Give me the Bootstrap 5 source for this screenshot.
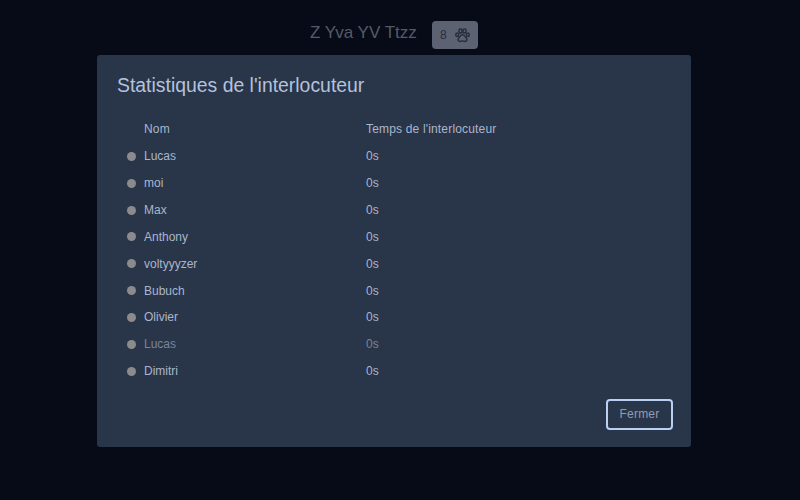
<!DOCTYPE html>
<html lang="fr">
<head>
  <meta charset="UTF-8" />
  <meta name="viewport" content="width=device-width, initial-scale=1.0"/>
  <title>Statistiques de l'interlocuteur</title>
  <link href="https://cdn.jsdelivr.net/npm/bootstrap@5.3.3/dist/css/bootstrap.min.css" rel="stylesheet">
  <style>
    body {
      background: #070b17;
      font-family: "Liberation Sans", Arial, sans-serif;
      width: 800px;
      height: 500px;
      overflow: hidden;
    }
    .top-bar { height: 55px; padding-top: 21px; padding-left: 310px; }
    .room-name { font-size: 17px; line-height: 24px; color: #555a68; }
    .member-chip {
      width: 46px; height: 28px; margin-left: 15px;
      background: #5d6273; color: #282d3b;
      border-radius: 4px; font-size: 12px;
    }
    .stats-box {
      width: 594px; height: 392px; margin-left: 97px;
      background: #293548; border-radius: 3px;
      padding: 18px 18px 17px 20px;
    }
    .stats-title { font-size: 19.4px; line-height: 24px; font-weight: 400; color: #b3c2dd; margin: 0 0 19px; }
    .stats-table { --bs-table-bg: transparent; --bs-table-color: #a9b6cd; margin: 0; width: 554px; font-size: 12px; table-layout: fixed; }
    .stats-table th, .stats-table td { height: 26.86px; padding: 0; border: 0; font-weight: 400; vertical-align: middle; line-height: 18px; }
    .stats-table th { letter-spacing: .17px; }
    .col-dot { width: 27px; }
    .col-name { width: 222px; }
    .dot { display: block; width: 9px; height: 9px; border-radius: 50%; background: #8b8b8b; margin-left: 10px; }
    .row-dim td { --bs-table-color: #78859b; color: #78859b; }
    .close-btn {
      width: 67px; height: 31px; padding: 0 0 2px;
      background: transparent; color: #8f9db5;
      border: 2px solid #b9d0f2; border-radius: 4px;
      font-size: 12px; letter-spacing: .2px;
    }
    .close-btn:hover { background: transparent; color: #8f9db5; border-color: #b9d0f2; }
  </style>
</head>
<body>
  <div class="top-bar d-flex align-items-start">
    <span class="room-name">Z Yva YV Ttzz</span>
    <span class="member-chip d-flex align-items-center justify-content-center gap-2">
      <span>8</span>
      <svg width="15" height="15" viewBox="0 0 16 16" fill="none" stroke="currentColor" stroke-width="1.6">
        <ellipse cx="5.9" cy="3.2" rx="1.7" ry="2.2"/>
        <ellipse cx="10.1" cy="3.2" rx="1.7" ry="2.2"/>
        <ellipse cx="2.3" cy="7.2" rx="1.5" ry="1.9"/>
        <ellipse cx="13.7" cy="7.2" rx="1.5" ry="1.9"/>
        <path d="M8 7.2c-1.8 0-2.6 1.4-3.3 2.6-.7 1-1.6 1.6-1.4 3 .2 1.200 1.500 1.700 2.700 1.400.9-.2 1.300-.4 2-.4s1.100.2 2 .4c1.200.3 2.500-.2 2.700-1.400.2-1.400-.7-2-1.400-3C10.600 8.600 9.800 7.200 8 7.200z"/>
      </svg>
    </span>
  </div>

  <div class="stats-box d-flex flex-column">
    <h5 class="stats-title">Statistiques de l'interlocuteur</h5>
    <table class="table stats-table">
      <thead>
        <tr><th class="col-dot"></th><th class="col-name">Nom</th><th>Temps de l'interlocuteur</th></tr>
      </thead>
      <tbody id="rows"></tbody>
    </table>
    <div class="d-flex justify-content-end mt-auto">
      <button type="button" class="btn close-btn">Fermer</button>
    </div>
  </div>

  <script src="https://cdn.jsdelivr.net/npm/bootstrap@5.3.3/dist/js/bootstrap.bundle.min.js"></script>
  <script>
    const names = ["Lucas", "moi", "Max", "Anthony", "voltyyyzer", "Bubuch", "Olivier", "Lucas", "Dimitri"];
    const rows = document.getElementById("rows");
    names.forEach((n, i) => {
      const tr = document.createElement("tr");
      if (i === 7) tr.className = "row-dim";
      tr.innerHTML = `<td><span class="dot"></span></td><td>${n}</td><td>0s</td>`;
      rows.appendChild(tr);
    });
  </script>
</body>
</html>
